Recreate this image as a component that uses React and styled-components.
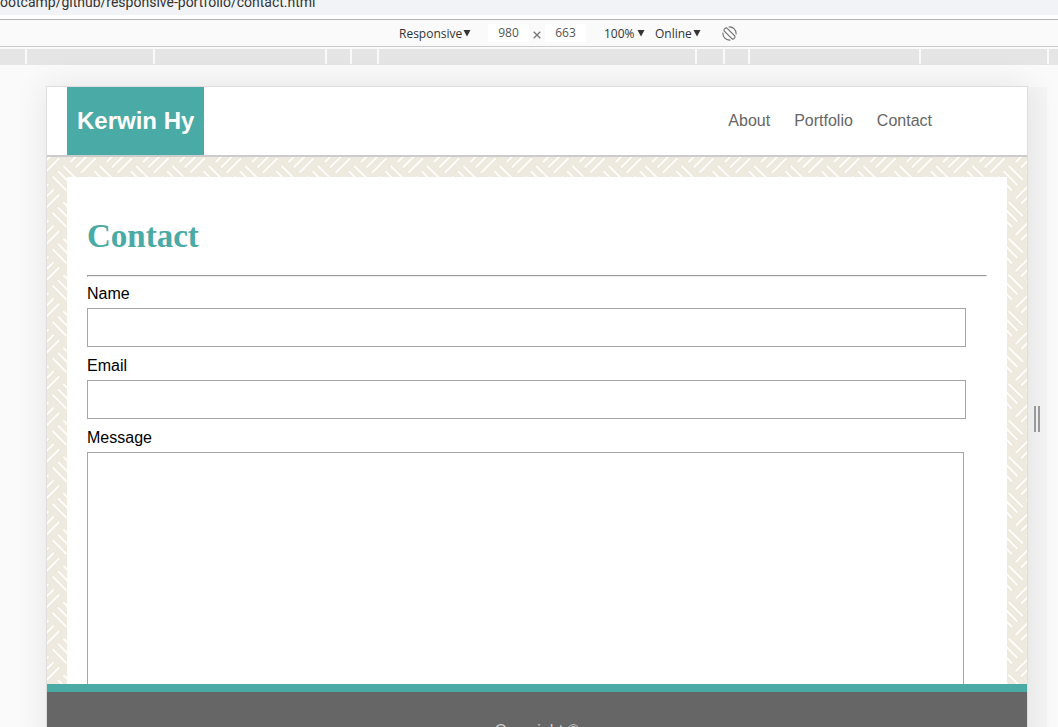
import React from "react";
import styled, { createGlobalStyle } from "styled-components";

const teal = "#4aaaa5";
const ui = `"Open Sans", "Noto Sans", sans-serif`;
const sans = `"Liberation Sans", Arial, sans-serif`;

// Basket-weave background: three "\\" strokes and three "/" strokes per cell, 11 cells per 400px tile.
const strokes =
  "M16.8 9.3l13.1 13.1M11.4 14.6l13.1 13.1M6 20l13.1 13.1M23.8 4.6l13.5 -13.5M29.2 9.9l13.5 -13.5M34.6 15.2l13.5 -13.5";
const cell = 400 / 11;
const shifts = [
  [0, 0],
  [-cell, 0],
  [0, cell],
  [-cell, cell],
];
const copies = (attrs) =>
  shifts
    .map(([x, y]) => `<path transform='translate(${x} ${y})' d='${strokes}' ${attrs}/>`)
    .join("");
const weave = `<svg xmlns='http://www.w3.org/2000/svg' width='400' height='400'><defs><pattern id='w' width='${cell}' height='${cell}' patternUnits='userSpaceOnUse'><g fill='none' stroke-linecap='round'>${copies(
  "stroke='#eae4d4' stroke-width='3.8'"
)}${copies("stroke='#ffffff' stroke-width='2.1'")}</g></pattern></defs><rect width='400' height='400' fill='#eeeadf'/><rect width='400' height='400' fill='url(#w)'/></svg>`;
const weaveUrl = `url("data:image/svg+xml,${encodeURIComponent(weave)}")`;

const GlobalStyle = createGlobalStyle`
  * { box-sizing: border-box; }
  body { margin: 0; background: #fafafa; }
`;

const Browser = styled.div`
  height: 100vh;
  display: flex;
  flex-direction: column;
  overflow: hidden;
  background: #fafafa;
  font-family: ${ui};
`;

const AddressBar = styled.div`
  flex: none;
  height: 19px;
  display: flex;
  align-items: flex-end;
  overflow: hidden;
  background: #f1f3f6;
  border-bottom: 4px solid #fff;
  color: #333;
  font-family: Roboto, ${ui};
  font-size: 14px;
  line-height: 26px;
  white-space: nowrap;
`;

const Toolbar = styled.div`
  flex: none;
  height: 28px;
  display: flex;
  align-items: center;
  justify-content: center;
  padding-left: 78px;
  border-top: 1px solid #b3b3b3;
  border-bottom: 1px solid #ccc;
  color: #333;
  font-size: 12px;
`;

const PickerBox = styled.label`
  display: flex;
  align-items: center;
  width: ${(p) => p.$width}px;
  margin-right: ${(p) => p.$after}px;
`;

const PickerSelect = styled.select`
  appearance: none;
  flex: 1;
  min-width: 0;
  padding: 2px 0 0;
  border: 0;
  background: transparent;
  color: #333;
  font: 12px/18px ${ui};
`;

const SizeInput = styled.input`
  width: 41px;
  height: 18px;
  padding: 0;
  border: 0;
  background: #fff;
  color: #555;
  font: 12px/18px ${ui};
  text-align: center;
`;

const SizeGroup = styled.div`
  display: flex;
  align-items: center;
  margin-right: 18px;
`;

const Times = styled.span`
  width: 16px;
  padding-top: 3px;
  display: flex;
  justify-content: center;
`;

const RotateButton = styled.button`
  display: flex;
  margin-left: 21px;
  padding: 0;
  border: 0;
  background: transparent;
`;

const MediaBar = styled.div`
  flex: none;
  display: flex;
  gap: 2px;
  height: 16px;
  margin-top: 2px;
  border-bottom: 1px solid #e5e5e5;
`;

const MediaRange = styled.span`
  flex: ${(p) => p.$size} 1 0;
  background: #e5e5e5;
`;

const Stage = styled.div`
  flex: 1;
  min-height: 0;
  display: flex;
  margin-top: 21px;
  padding: 0 11px 0 46px;
`;

const Device = styled.div`
  flex: 1;
  min-width: 0;
  height: calc(100% + 24px);
  display: flex;
  flex-direction: column;
  border: 1px solid #dedede;
  box-shadow: 0 0 32px rgba(0, 0, 0, 0.09);
  background: #fff;
  font-family: ${sans};
  font-size: 16px;
  line-height: 18px;
`;

const ResizeRail = styled.div`
  width: 19px;
  height: 100%;
  margin-top: 1px;
  padding: 319px 0 0 6px;
  background: rgba(0, 0, 0, 0.02);
`;

const Grip = styled.div`
  width: 6px;
  height: 26px;
  border: solid #999;
  border-width: 0 2px;
`;

const SiteHeader = styled.header`
  flex: none;
  height: 70px;
  display: flex;
  justify-content: space-between;
  align-items: stretch;
  padding: 0 95px 0 20px;
  border-bottom: 2px solid #ccc;
`;

const Brand = styled.a`
  display: flex;
  align-items: center;
  padding: 0 10px;
  background: ${teal};
  color: #fff;
  font-size: 24px;
  font-weight: bold;
  text-decoration: none;
`;

const Nav = styled.nav`
  display: flex;
  align-items: center;
  gap: 24px;
`;

const NavLink = styled.a`
  color: #666;
  text-decoration: none;
`;

const Main = styled.main`
  flex: 1;
  min-height: 0;
  overflow: hidden;
  padding: 20px;
  background: ${weaveUrl};
`;

const Panel = styled.section`
  padding: 20px;
  background: #fff;
`;

const Title = styled.h1`
  margin: 20px 0;
  color: ${teal};
  font: bold 33px/38px Georgia, "Liberation Serif", serif;
`;

const Rule = styled.hr`
  margin: 0 0 8px;
  border: 1px inset #eee;
`;

const FieldLabel = styled.label`
  display: block;
  margin-bottom: 5px;
  color: #000;
`;

const TextField = styled.input`
  display: block;
  box-sizing: content-box;
  width: 97%;
  height: 37px;
  margin: 0 0 10px;
  padding: 0 2px;
  border: 1px solid #a6a6a6;
  font: 16px ${sans};
`;

const MessageField = styled.textarea`
  display: block;
  box-sizing: content-box;
  width: 97%;
  height: 300px;
  padding: 0 1px;
  border: 1px solid #a6a6a6;
  resize: none;
  font: 16px ${sans};
`;

const SiteFooter = styled.footer`
  flex: none;
  height: 66px;
  padding-top: 30px;
  border-top: 8px solid ${teal};
  background: #666;
  color: #ccc;
  text-align: center;
`;

function Picker({ label, value, width, after }) {
  return (
    <PickerBox $width={width} $after={after}>
      <PickerSelect aria-label={label} defaultValue={value}>
        <option>{value}</option>
      </PickerSelect>
      <svg width="8" height="7" viewBox="0 0 8 7" aria-hidden="true">
        <path d="M0.5 0h7L4 6.5z" fill="#333" />
      </svg>
    </PickerBox>
  );
}

const ranges = [25, 126, 170, 23, 25, 316, 26, 23, 169, 126, 9];

export default function App() {
  return (
    <Browser>
      <GlobalStyle />
      <AddressBar>ootcamp/github/responsive-portfolio/contact.html</AddressBar>
      <Toolbar>
        <Picker label="Device" value="Responsive" width={72} after={17} />
        <SizeGroup>
          <SizeInput aria-label="Width" defaultValue="980" />
          <Times>
            <svg width="8" height="8" viewBox="0 0 8 8" role="img" aria-label="by">
              <path d="M0.7 0.7l6.6 6.6M7.3 0.7L0.7 7.3" stroke="#777" strokeWidth="1.3" />
            </svg>
          </Times>
          <SizeInput aria-label="Height" defaultValue="663" />
        </SizeGroup>
        <Picker label="Zoom" value="100%" width={41} after={10} />
        <Picker label="Throttling" value="Online" width={46} after={0} />
        <RotateButton aria-label="Rotate">
          <svg width="15" height="15" viewBox="0 0 15 15" fill="none" stroke="#6e6e6e">
            <path
              d="M4.9 2.1L12.9 10.1Q13.4 11.6 12.2 12.4Q11.2 13.5 10.1 12.9L2.1 4.9Q1.6 3.6 2.8 2.6Q3.8 1.5 4.9 2.1z"
              strokeWidth="1.1"
            />
            <path d="M6.6 1A6.5 6.5 0 0 1 14 8.4M1 6.6A6.5 6.5 0 0 0 8.4 14" strokeWidth="1.1" />
          </svg>
        </RotateButton>
      </Toolbar>
      <MediaBar>
        {ranges.map((size, i) => (
          <MediaRange key={i} $size={size} />
        ))}
      </MediaBar>
      <Stage>
        <Device>
          <SiteHeader>
            <Brand href="#home">Kerwin Hy</Brand>
            <Nav>
              <NavLink href="#about">About</NavLink>
              <NavLink href="#portfolio">Portfolio</NavLink>
              <NavLink href="#contact">Contact</NavLink>
            </Nav>
          </SiteHeader>
          <Main>
            <Panel>
              <Title>Contact</Title>
              <Rule />
              <form>
                <FieldLabel htmlFor="name">Name</FieldLabel>
                <TextField id="name" type="text" />
                <FieldLabel htmlFor="email">Email</FieldLabel>
                <TextField id="email" type="email" />
                <FieldLabel htmlFor="message">Message</FieldLabel>
                <MessageField id="message" />
              </form>
            </Panel>
          </Main>
          <SiteFooter>Copyright ©</SiteFooter>
        </Device>
        <ResizeRail>
          <Grip />
        </ResizeRail>
      </Stage>
    </Browser>
  );
}
